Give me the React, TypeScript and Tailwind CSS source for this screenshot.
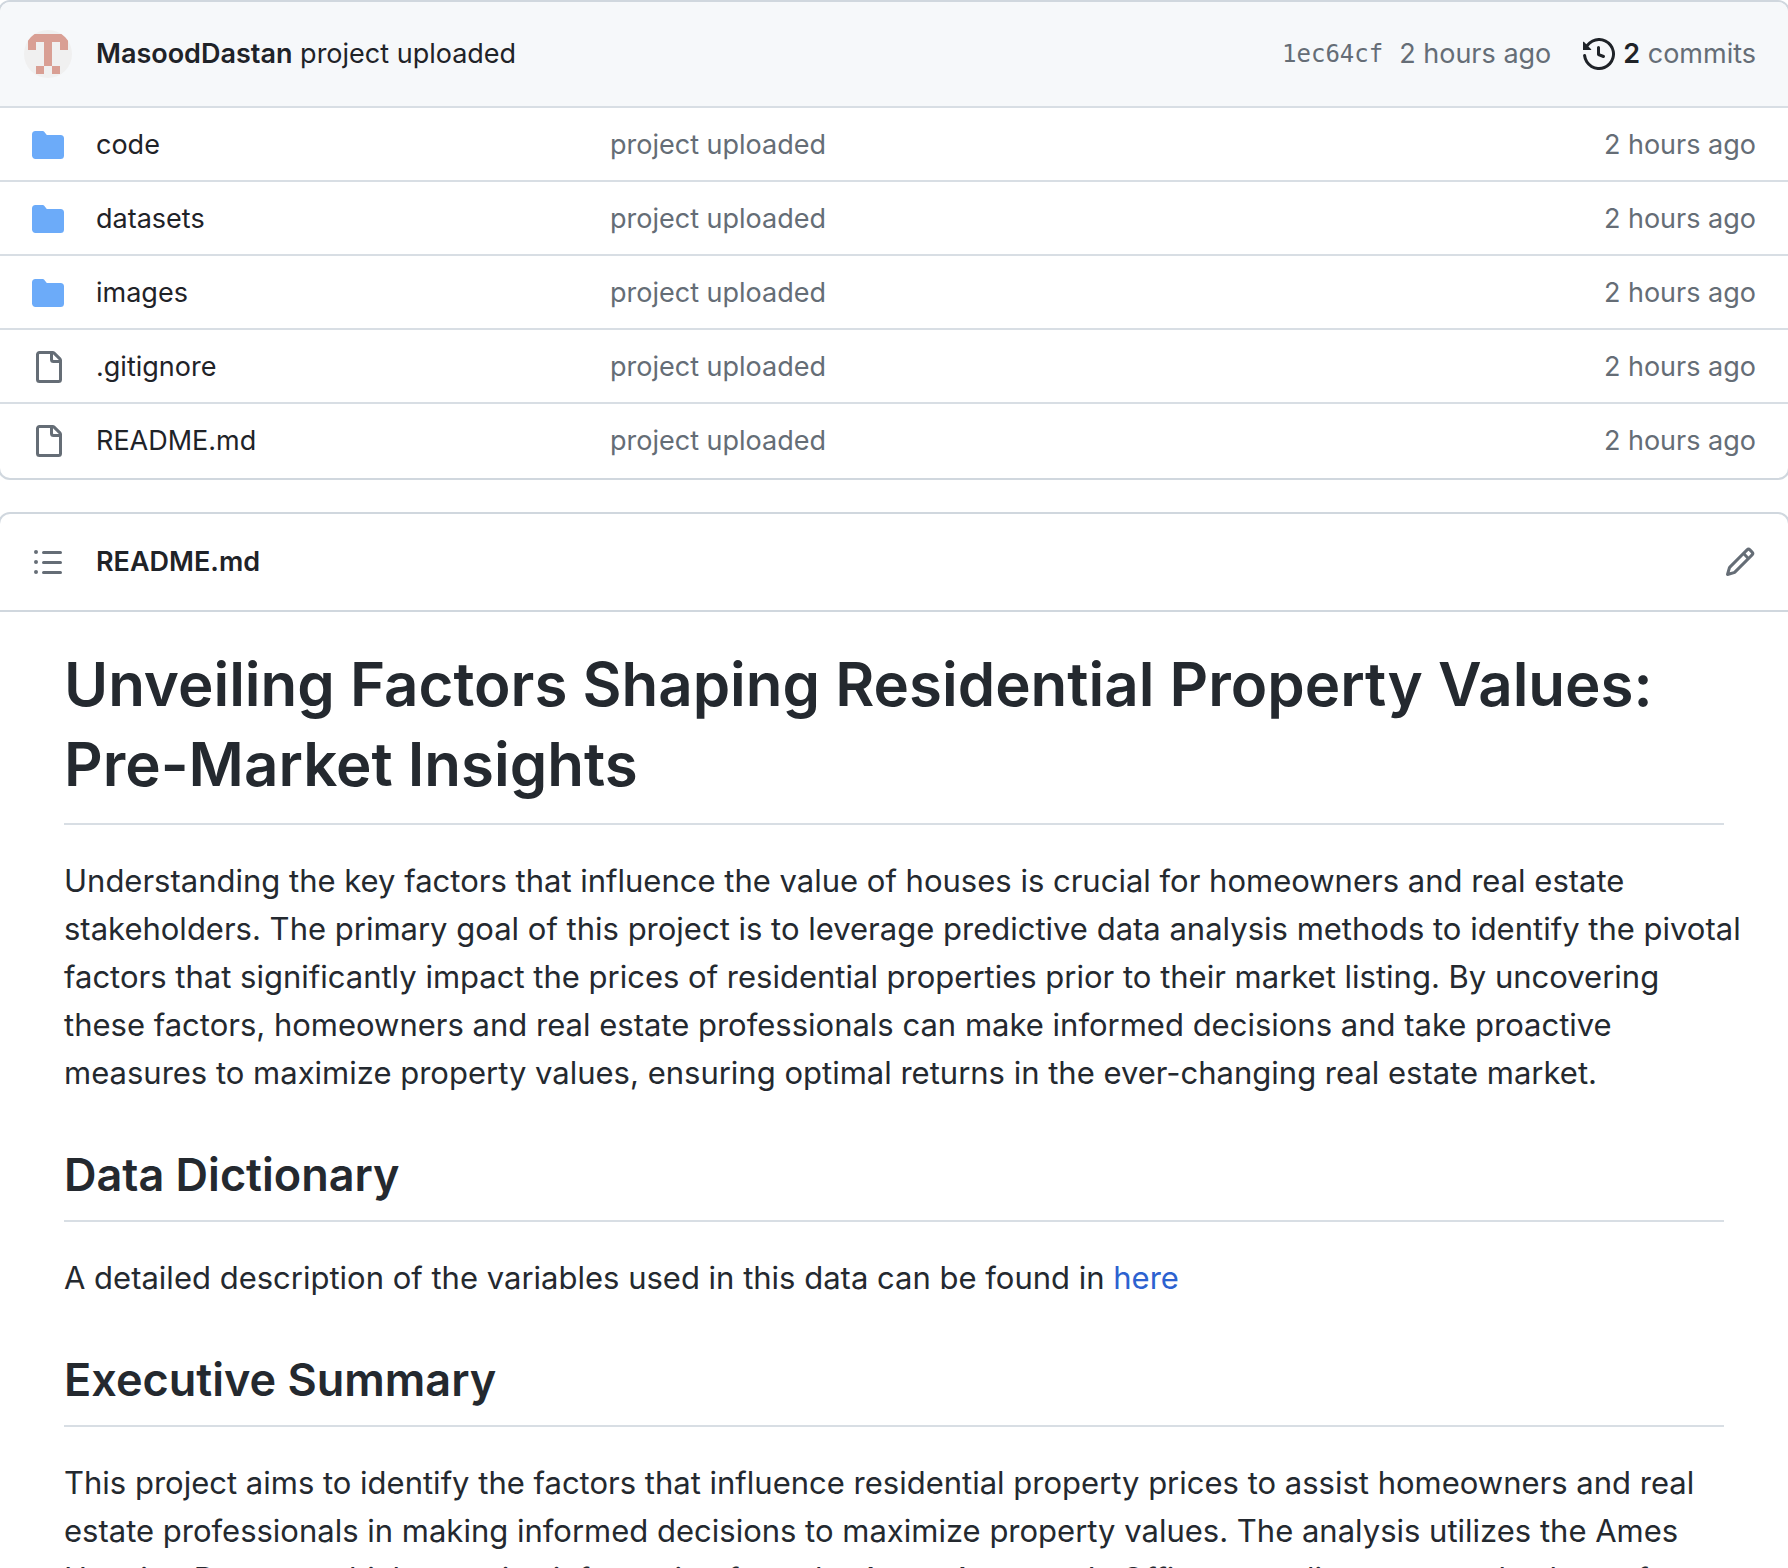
import React from "react";

const files = [
  { name: "code", kind: "dir" },
  { name: "datasets", kind: "dir" },
  { name: "images", kind: "dir" },
  { name: ".gitignore", kind: "file" },
  { name: "README.md", kind: "file" },
];

function Icon({ d, className, label }: { d: string; className: string; label?: string }) {
  return (
    <svg viewBox="0 0 16 16" fill="currentColor" aria-hidden={label ? undefined : true} aria-label={label} className={className}>
      <path d={d} />
    </svg>
  );
}

const FOLDER =
  "M1.75 1A1.75 1.75 0 0 0 0 2.75v10.5C0 14.216.784 15 1.75 15h12.5A1.75 1.75 0 0 0 16 13.25v-8.5A1.75 1.75 0 0 0 14.25 3H7.5a.25.25 0 0 1-.2-.1l-.9-1.2C6.07 1.26 5.55 1 5 1H1.75Z";
const FILE =
  "M2 1.75C2 .784 2.784 0 3.75 0h6.586c.464 0 .909.184 1.237.513l2.914 2.914c.329.328.513.773.513 1.237v9.586A1.75 1.75 0 0 1 13.25 16h-9.5A1.75 1.75 0 0 1 2 14.25Zm1.75-.25a.25.25 0 0 0-.25.25v12.5c0 .138.112.25.25.25h9.5a.25.25 0 0 0 .25-.25V6h-2.75A1.75 1.75 0 0 1 9 4.25V1.5Zm6.75.062V4.25c0 .138.112.25.25.25h2.688l-.011-.013-2.914-2.914-.013-.011Z";
const HISTORY =
  "m.427 1.927 1.215 1.215a8.002 8.002 0 1 1-1.6 5.685.75.75 0 1 1 1.493-.154 6.5 6.5 0 1 0 1.18-4.458l1.358 1.358A.25.25 0 0 1 3.896 6H.25A.25.25 0 0 1 0 5.75V2.104a.25.25 0 0 1 .427-.177ZM7.75 4a.75.75 0 0 1 .75.75v2.992l2.028.812a.75.75 0 0 1-.557 1.392l-2.5-1A.751.751 0 0 1 7 8.25v-3.5A.75.75 0 0 1 7.75 4Z";
const LIST =
  "M5.75 2.5h8.5a.75.75 0 0 1 0 1.5h-8.5a.75.75 0 0 1 0-1.5Zm0 5h8.5a.75.75 0 0 1 0 1.5h-8.5a.75.75 0 0 1 0-1.5Zm0 5h8.5a.75.75 0 0 1 0 1.5h-8.5a.75.75 0 0 1 0-1.5ZM2 14a1 1 0 1 1 0-2 1 1 0 0 1 0 2Zm1-6a1 1 0 1 1-2 0 1 1 0 0 1 2 0ZM2 4a1 1 0 1 1 0-2 1 1 0 0 1 0 2Z";
const PENCIL =
  "M11.013 1.427a1.75 1.75 0 0 1 2.474 0l1.086 1.086a1.75 1.75 0 0 1 0 2.474l-8.61 8.61c-.21.21-.47.364-.756.445l-3.251.93a.75.75 0 0 1-.927-.928l.929-3.25c.081-.286.235-.547.445-.758l8.61-8.61Zm.176 4.823L9.75 4.81l-6.286 6.287a.253.253 0 0 0-.064.108l-.558 1.953 1.953-.558a.253.253 0 0 0 .108-.064Zm1.238-3.763a.25.25 0 0 0-.354 0L10.811 3.75l1.439 1.44 1.263-1.263a.25.25 0 0 0 0-.354Z";

function Avatar() {
  return (
    <svg viewBox="0 0 48 48" className="size-12" role="img" aria-label="MasoodDastan">
      <clipPath id="avatar-round">
        <circle cx="24" cy="24" r="24" />
      </clipPath>
      <g clipPath="url(#avatar-round)">
        <rect width="48" height="48" fill="#f0f0f0" />
        <path d="M4 4h40v16h-8v-8h-8v24h8v8h-8v-8h-8v8h-8v-8h8V12h-8v8H4z" fill="#d99f94" />
      </g>
    </svg>
  );
}

export default function App() {
  return (
    <div className="h-screen overflow-hidden bg-white font-[Inter,sans-serif] text-[27px] leading-[42px] text-[#1f2328]">
      <section className="-mx-0.5 overflow-hidden rounded-xl border-2 border-[#d0d7de] pb-0.5">
        <div className="flex h-[104px] items-center bg-[#f6f8fa] pr-8 pl-6">
          <Avatar />
          <div className="ml-6 flex-1">
            <a href="#author" className="font-semibold">MasoodDastan</a>{" "}
            <a href="#commit">project uploaded</a>
          </div>
          <div className="flex items-center text-[#656d76]">
            <a href="#sha" className="mr-4 font-['DejaVu_Sans_Mono',monospace] text-2xl">1ec64cf</a>
            <span>2 hours ago</span>
            <a href="#commits" className="ml-8 flex items-center">
              <Icon d={HISTORY} className="mr-2 size-8 text-[#1f2328]" />
              <span>
                <strong className="font-semibold text-[#1f2328]">2</strong> commits
              </span>
            </a>
          </div>
        </div>
        <table className="w-full table-fixed border-separate border-spacing-0">
          <tbody>
            {files.map((f) => (
              <tr key={f.name} className="h-[74px] *:border-t-2 *:border-[#d8dee4] *:pt-0.5">
                <td className="w-24 pl-8">
                  {f.kind === "dir" ? (
                    <Icon d={FOLDER} label="Directory" className="size-8 text-[#6cabf9]" />
                  ) : (
                    <Icon d={FILE} label="File" className="size-8 text-[#656d76]" />
                  )}
                </td>
                <td className="w-[514px]">
                  <a href="#file">{f.name}</a>
                </td>
                <td className="text-[#656d76]">
                  <a href="#commit">project uploaded</a>
                </td>
                <td className="w-64 pr-8 text-right text-[#656d76]">2 hours ago</td>
              </tr>
            ))}
          </tbody>
        </table>
      </section>

      <section className="-mx-0.5 mt-8 rounded-xl border-2 border-[#d0d7de]">
        <div className="flex h-[98px] items-center border-b-2 border-[#d0d7de] px-8">
          <button type="button" aria-label="Table of contents" className="text-[#656d76]">
            <Icon d={LIST} className="size-8" />
          </button>
          <h2 className="ml-8 flex-1 font-semibold">README.md</h2>
          <button type="button" aria-label="Edit file" className="text-[#656d76]">
            <Icon d={PENCIL} className="size-8" />
          </button>
        </div>
        <article className="px-16 pt-8 text-[31px] leading-[48px] text-[#24292f]">
          <h1 className="mb-8 border-b-2 border-[#d8dee4] pb-[19px] text-6xl leading-[80px] font-semibold">
            Unveiling Factors Shaping Residential Property Values:
            <br />
            Pre-Market Insights
          </h1>
          <p className="whitespace-nowrap">
            Understanding the key factors that influence the value of houses is crucial for homeowners and real estate
            <br />
            stakeholders. The primary goal of this project is to leverage predictive data analysis methods to identify the pivotal
            <br />
            factors that significantly impact the prices of residential properties prior to their market listing. By uncovering
            <br />
            these factors, homeowners and real estate professionals can make informed decisions and take proactive
            <br />
            measures to maximize property values, ensuring optimal returns in the ever-changing real estate market.
          </p>
          <h2 className="mt-12 mb-8 border-b-2 border-[#d8dee4] pb-[15px] text-[45px] leading-[60px] font-semibold">
            Data Dictionary
          </h2>
          <p>
            A detailed description of the variables used in this data can be found in{" "}
            <a href="#dictionary" className="text-[#2c62d0]">here</a>
          </p>
          <h2 className="mt-12 mb-8 border-b-2 border-[#d8dee4] pb-[15px] text-[45px] leading-[60px] font-semibold">
            Executive Summary
          </h2>
          <p className="whitespace-nowrap">
            This project aims to identify the factors that influence residential property prices to assist homeowners and real
            <br />
            estate professionals in making informed decisions to maximize property values. The analysis utilizes the Ames
            <br />
            Housing Dataset, which contains information from the Ames Assessor's Office regarding assessed values of
          </p>
        </article>
      </section>
    </div>
  );
}
